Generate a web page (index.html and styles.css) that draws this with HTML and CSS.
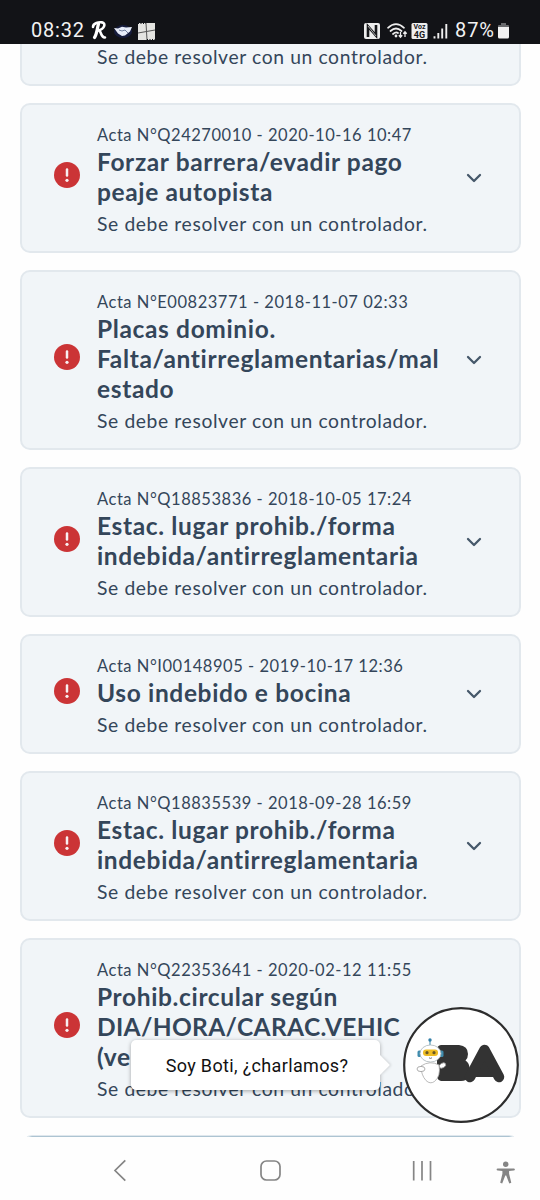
FILE: index.html
```html
<!DOCTYPE html>
<html lang="es">
<head>
<meta charset="utf-8">
<title>Actas</title>
<link rel="stylesheet" href="styles.css">
</head>
<body>
<svg width="0" height="0" class="defs">
  <symbol id="alert" viewBox="0 0 26 26"><circle cx="13" cy="13" r="13" fill="#cb3436"/><path d="M13 7.600v6" stroke="#f8f0f2" stroke-width="2.500" stroke-linecap="round"/><circle cx="13" cy="18.300" r="1.600" fill="#f8f0f2"/></symbol>
  <symbol id="chev" viewBox="0 0 16 10"><path d="M2 2l6 6 6-6" fill="none" stroke="#46586a" stroke-width="2.300" stroke-linecap="round" stroke-linejoin="round"/></symbol>
</svg>
<div class="phone">
  <header class="status">
    <span class="time">08:32</span>
    <svg class="left-icons" width="66" height="20" viewBox="0 0 66 20">
      <g fill="none" stroke="#fff" stroke-linecap="round" stroke-linejoin="round"><path d="M2 6C2 2 8 1 11 1.400C15 2 14 8 7 9.500C11 9 9 17 14 16.500" stroke-width="2.600"/><path d="M7.500 3C6 8 6 13 3.500 16.500" stroke-width="3.200"/></g>
      <ellipse cx="32" cy="10.500" rx="9" ry="6.500" fill="#171d3d"/>
      <path d="M23 7l4 .5 4-1.800 4 .8 6-.5-2 4.500-5 4-3 .5-4-2.500z" fill="#e8eefa"/><path d="M28 9l3 1 3-1 3 3" fill="none" stroke="#536386" stroke-width=".8"/>
      <path d="M47 2h17v17H47z" fill="#e4e4e1"/><path d="M55 2l1 17M47 12l17-3" stroke="#555" stroke-width="1"/><path d="M47 2.500h8M56 18.500h8" stroke="#111318" stroke-width="1" stroke-dasharray="1 1.500"/>
    </svg>
    <svg class="right-icons" width="86" height="20" viewBox="0 0 86 20">
      <rect x="0" y="2" width="16" height="16" rx="2" fill="#eee"/><path d="M4 16V5.500l8 9V4" fill="none" stroke="#17181b" stroke-width="2.600"/><path d="M4 5l8 10" stroke="#eee" stroke-width=".7"/>
      <g fill="none" stroke="#eee" stroke-width="1.700" stroke-linecap="round"><path d="M24 6.800Q32 -.5 40 6.800M26.500 10Q32 5 37.500 10M29 13Q32 10.500 34 12"/></g><circle cx="32" cy="15" r="1.400" fill="#eee"/><path d="M36.500 11v5m-1.700-1.700 1.700 1.900 1.700-1.900M41 16v-5m-1.700 1.700L41 10.800l1.700 1.900" fill="none" stroke="#eee" stroke-width="1.300"/>
      <rect x="47.500" y="2" width="16" height="16" rx="1.500" fill="#eee"/><text class="voz" x="55.500" y="8.300">Voz</text><text class="four" x="55.500" y="16.800">4G</text>
      <path d="M70.500 15.200v2.300M74.300 12v5.500M78.200 7.500v10M82.300 3v14.500" stroke="#eee" stroke-width="1.900"/>
    </svg>
    <span class="pct">87%</span>
    <svg class="battery" width="11" height="16" viewBox="0 0 11 16"><path d="M3 0h5v2h2q1 0 1 1v2H0V3q0-1 1-1h2z" fill="#696a6d"/><path d="M0 4h11v10q0 1.500-1.500 1.500h-8Q0 15.500 0 14z" fill="#f2f2f2"/></svg>
  </header>
  <main class="list">
    <article class="card scrolled">
      <div class="body"><p class="desc">Se debe resolver con un controlador.</p></div>
    </article>
    <article class="card">
      <svg class="alert"><use href="#alert"/></svg>
      <div class="body"><p class="acta">Acta N°Q24270010 - 2020-10-16 10:47</p><h2>Forzar barrera/evadir pago<br>peaje autopista</h2><p class="desc">Se debe resolver con un controlador.</p></div>
      <svg class="chev"><use href="#chev"/></svg>
    </article>
    <article class="card">
      <svg class="alert"><use href="#alert"/></svg>
      <div class="body"><p class="acta">Acta N°E00823771 - 2018-11-07 02:33</p><h2>Placas dominio.<br>Falta/antirreglamentarias/mal<br>estado</h2><p class="desc">Se debe resolver con un controlador.</p></div>
      <svg class="chev"><use href="#chev"/></svg>
    </article>
    <article class="card">
      <svg class="alert"><use href="#alert"/></svg>
      <div class="body"><p class="acta">Acta N°Q18853836 - 2018-10-05 17:24</p><h2>Estac. lugar prohib./forma<br>indebida/antirreglamentaria</h2><p class="desc">Se debe resolver con un controlador.</p></div>
      <svg class="chev"><use href="#chev"/></svg>
    </article>
    <article class="card">
      <svg class="alert"><use href="#alert"/></svg>
      <div class="body"><p class="acta">Acta N°I00148905 - 2019-10-17 12:36</p><h2>Uso indebido e bocina</h2><p class="desc">Se debe resolver con un controlador.</p></div>
      <svg class="chev"><use href="#chev"/></svg>
    </article>
    <article class="card">
      <svg class="alert"><use href="#alert"/></svg>
      <div class="body"><p class="acta">Acta N°Q18835539 - 2018-09-28 16:59</p><h2>Estac. lugar prohib./forma<br>indebida/antirreglamentaria</h2><p class="desc">Se debe resolver con un controlador.</p></div>
      <svg class="chev"><use href="#chev"/></svg>
    </article>
    <article class="card">
      <svg class="alert"><use href="#alert"/></svg>
      <div class="body"><p class="acta">Acta N°Q22353641 - 2020-02-12 11:55</p><h2>Prohib.circular según<br><span class="caps">DIA/HORA/CARAC.VEHIC</span><br>(ve</h2><p class="desc">Se debe resolver con un controlador.</p></div>
      <svg class="chev"><use href="#chev"/></svg>
    </article>
    <div class="next-card"></div>
  </main>
  <nav class="nav">
    <svg width="540" height="63" viewBox="0 0 540 63" fill="none" stroke="#858585" stroke-width="1.700">
      <path d="M125.300 23.300L115 33.500l10.300 10.200"/>
      <rect x="261" y="24" width="19" height="19" rx="5.500"/>
      <path d="M413.700 24v19.500M422 24v19.500M430.500 24v19.500"/>
      <g fill="#858585" stroke="none"><circle cx="505.700" cy="27.300" r="2.700"/><path d="M497.800 31.400h15.900q1.200 0 1.200 1t-1.200 1.200l-4.600.5v2.700l2.200 9-2 .6-3.100-8h-.9l-3.100 8-2-.6 2.200-9v-2.700l-4.600-.5q-1.200-.2-1.200-1.200t1.200-1z"/></g>
    </svg>
  </nav>
  <div class="bubble">Soy Boti, ¿charlamos?</div>
  <svg class="boti" width="116" height="116" viewBox="0 0 116 116">
    <circle cx="58" cy="58" r="56.800" fill="#fff" stroke="#2d2d2d" stroke-width="2.200"/>
    <path d="M38 38h18q9 1 9 9 0 4-2.500 6.500 4 2.500 4 8l-.5 8q-2.500 4.500-8 4.500H38q-4-1-4-5V43q0-4.500 4-5z" fill="#333"/>
    <path d="M81.500 43L67 70h29z" fill="#333"/><path d="M67 70l14.500-27L96 70" fill="none" stroke="#333" stroke-width="10.500" stroke-linecap="round" stroke-linejoin="round"/>
    <path d="M27 38v-6" stroke="#3288aa" stroke-width="1"/><circle cx="27" cy="33" r="1.700" fill="#327fa8"/>
    <rect x="14.500" y="43.500" width="4" height="6.500" rx="1.500" fill="#3f8cae"/><rect x="36.500" y="43.500" width="4" height="6.500" rx="1.500" fill="#3f8cae"/>
    <ellipse cx="27.500" cy="46.500" rx="10.500" ry="8.500" fill="#fff" stroke="#a9b5b9" stroke-width=".8"/>
    <rect x="20" y="42.500" width="15" height="6.500" rx="3" fill="#efbd24"/><circle cx="24" cy="45.700" r="1.600" fill="#6c5924"/><circle cx="31" cy="45.700" r="1.600" fill="#6c5924"/><path d="M26 50.800q1.500 1.200 3 0" fill="none" stroke="#555" stroke-width=".8"/>
    <path d="M18 59Q27 53 36 58q2 11-4.500 16.500-4.500 3-8.500-1Q18 68 18 59z" fill="#fff" stroke="#aaa" stroke-width=".8"/><ellipse cx="18" cy="62" rx="4" ry="2.600" fill="#fff" stroke="#999" stroke-width=".8"/><ellipse cx="39.500" cy="58.500" rx="3.500" ry="2.300" transform="rotate(-30 39.500 58.500)" fill="#fff" stroke="#999" stroke-width=".8"/>
  </svg>
</div>
</body>
</html>
```
FILE: styles.css
```css
* { box-sizing: border-box; }
body { margin: 0; background: #fefefe; font-family: Lato, "Noto Sans", sans-serif; color: #34465a; }
.defs { position: absolute; }
.phone { position: relative; width: 540px; height: 1200px; overflow: hidden; display: grid; grid-template-rows: 44px 1093px 63px; }
.status { background: #121317; color: #f2f2f2; display: flex; align-items: center; padding: 17px 0 0 31px; z-index: 1; font: 20px/27px Roboto, sans-serif; white-space: nowrap; }
.time { width: 60px; letter-spacing: .8px; }
.left-icons { flex: none; }
.right-icons { flex: none; margin-left: 207px; }
.pct { margin-left: 5px; width: 43px; letter-spacing: .9px; }
.battery { flex: none; }
.voz { font: bold 7px Roboto, sans-serif; text-anchor: middle; fill: #17181b; }
.four { font: bold 9px Roboto, sans-serif; text-anchor: middle; fill: #17181b; }
.list { min-height: 0; overflow: hidden; display: flex; flex-direction: column; gap: 17px; padding: 0 19px 0 20px; }
.card { flex: none; display: flex; align-items: center; background: #f1f5f8; border: 2px solid #e2e8ed; border-radius: 10px; padding: 19px 37px 13px 32px; }
.scrolled { height: 60px; margin-top: -18px; padding: 12px 37px 13px 58px; }
.alert { width: 26px; height: 26px; flex: none; margin-top: -13px; }
.body { width: 371px; flex: none; padding-left: 17px; white-space: nowrap; }
.acta, .desc, h2 { margin: 0; }
.acta { height: 23px; font-size: 16.500px; line-height: 23px; letter-spacing: .53px; }
h2 { font-size: 24.500px; line-height: 30px; font-weight: 700; letter-spacing: .64px; }
.desc { height: 31px; font-size: 19.300px; line-height: 33px; letter-spacing: .62px; }
.caps { letter-spacing: .35px; }
.chev { width: 16px; height: 10px; flex: none; margin: -6px 0 0 15px; }
.next-card { flex: none; height: 20px; border: 1px solid #dfe7ed; border-radius: 10px; box-shadow: inset 0 1px #adc4d2; margin: 0 2px; }
.nav { background: #fefefe; }
.bubble { position: absolute; left: 131px; top: 1040px; width: 249px; height: 50px; border-radius: 5px; background: #fff; color: #111; box-shadow: 0 1px 4px #0005; font: 18px/51px Roboto, sans-serif; letter-spacing: .35px; text-align: center; padding-left: 3px; }
.bubble::after { content: ""; position: absolute; right: -7px; top: 18px; width: 14px; height: 14px; background: #fff; transform: rotate(45deg); box-shadow: 2px -2px 3px -1px #0002; }
.boti { position: absolute; left: 403px; top: 1007px; }
```
